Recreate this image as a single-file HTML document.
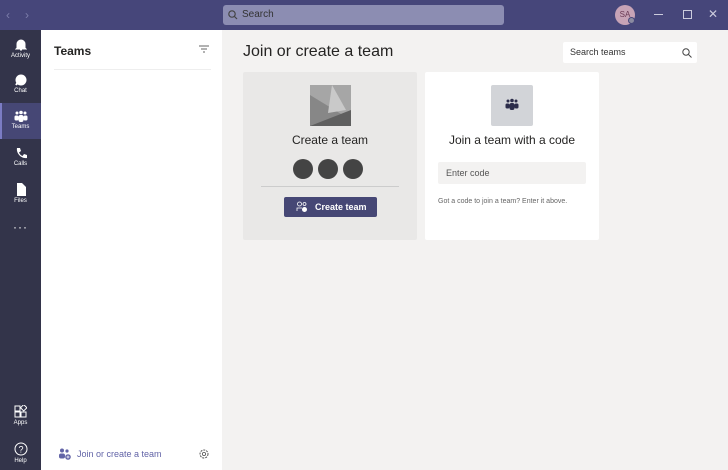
<!DOCTYPE html><html><head><style>
*{margin:0;padding:0;box-sizing:border-box}
body{width:728px;height:470px;overflow:hidden;font-family:"Liberation Sans",sans-serif;background:#f3f2f1;position:relative}
.a{position:absolute}
.top{left:0;top:0;width:728px;height:30px;background:#46467a}
.rail{left:0;top:30px;width:41px;height:440px;background:#33344a}
.ri{position:absolute;left:0;width:41px;text-align:center;color:#fff;font-size:6px}
.side{left:41px;top:30px;width:181px;height:440px;background:#fff}
.card{background:#fff;border-radius:2px}
</style></head><body>
<div class="a top">
<div class="a" style="left:6px;top:8px;color:#7d7eab;font-size:12px">‹</div>
<div class="a" style="left:25px;top:8px;color:#7d7eab;font-size:12px">›</div>
<div class="a" style="left:223px;top:5px;width:281px;height:20px;background:#8c8db2;border-radius:3px">
<svg class="a" style="left:5px;top:5px" width="10" height="10"><circle cx="4" cy="4" r="3.2" fill="none" stroke="#444" stroke-width="1.2"/><path d="M6.5 6.5L9 9" stroke="#444" stroke-width="1.2"/></svg>
<span class="a" style="left:19px;top:4px;font-size:10px;color:#333">Search</span></div>
<div class="a" style="left:615px;top:5px;width:20px;height:20px;border-radius:50%;background:#c7a3b6;font-size:8px;color:#6b3a55;text-align:center;line-height:20px">SA</div>
<div class="a" style="left:628px;top:17px;width:7px;height:7px;border-radius:50%;background:#8a8aa0;border:1px solid #46467a"></div>
<div class="a" style="left:654px;top:14px;width:9px;height:1px;background:#ccd"></div>
<div class="a" style="left:683px;top:10px;width:9px;height:9px;border:1px solid #ccd"></div>
<div class="a" style="left:708px;top:7px;color:#ccd;font-size:12px">✕</div>
</div>
<div class="a rail">
<div class="a" style="left:0;top:73px;width:41px;height:36px;background:#464775"></div>
<div class="a" style="left:0;top:73px;width:2px;height:36px;background:#7b7cc4"></div>
<div class="ri" style="top:8px"><svg width="12" height="13"><path d="M2 10V6a4 4 0 018 0v4l1 1H1z M5 12h2" fill="#fff" stroke="#fff"/></svg><br>Activity</div>
<div class="ri" style="top:44px"><svg width="12" height="12"><circle cx="6" cy="6" r="5.5" fill="#fff"/><path d="M1 11l2-3" stroke="#fff" stroke-width="2"/></svg><br>Chat</div>
<div class="ri" style="top:80px"><svg width="14" height="12"><circle cx="3" cy="3" r="1.5" fill="#fff"/><circle cx="7" cy="2.5" r="1.8" fill="#fff"/><circle cx="11" cy="3" r="1.5" fill="#fff"/><rect x="0.5" y="5.5" width="4" height="5" rx="1.5" fill="#fff"/><rect x="4.5" y="5" width="5" height="7" rx="2" fill="#fff"/><rect x="9.5" y="5.5" width="4" height="5" rx="1.5" fill="#fff"/></svg><br>Teams</div>
<div class="ri" style="top:117px"><svg width="12" height="12"><path d="M2 1l3 0 1 3-2 1.5c1 2 2 3 3.5 3.5L9 7l3 1v3c-6 1-11-5-10-10z" fill="#fff"/></svg><br>Calls</div>
<div class="ri" style="top:153px"><svg width="12" height="13"><path d="M2 0h5l4 4v9H2z" fill="#fff"/></svg><br>Files</div>
<div class="ri" style="top:190px;font-size:12px;letter-spacing:1px">···</div>
<div class="ri" style="top:375px"><svg width="13" height="13"><rect x="1" y="1" width="5" height="5" fill="none" stroke="#fff"/><rect x="1" y="7" width="5" height="5" fill="none" stroke="#fff"/><rect x="7" y="7" width="5" height="5" fill="none" stroke="#fff"/><rect x="7.5" y="0.5" width="4.5" height="4.5" fill="none" stroke="#fff" transform="rotate(45 9.7 2.7)"/></svg><br>Apps</div>
<div class="ri" style="top:412px"><svg width="14" height="14"><circle cx="7" cy="7" r="6" fill="none" stroke="#fff"/><text x="7" y="10.5" font-size="9" fill="#fff" text-anchor="middle" font-family="Liberation Sans">?</text></svg><br>Help</div>
</div>
<div class="a side">
<div class="a" style="left:13px;top:14px;font-size:12px;font-weight:bold;color:#252423">Teams</div>
<svg class="a" style="left:158px;top:15px" width="10" height="8"><path d="M0 1h10M2 4h6M4 7h2" stroke="#666" stroke-width="1"/></svg>
<div class="a" style="left:13px;top:39px;width:157px;height:1px;background:#eee"></div>
<svg class="a" style="left:17px;top:418px" width="13" height="12"><circle cx="4" cy="2.5" r="2" fill="#6264a7"/><circle cx="9" cy="3" r="1.6" fill="#6264a7"/><rect x="1" y="5.5" width="6" height="5" rx="2" fill="#6264a7"/><circle cx="10" cy="9" r="2.8" fill="#6264a7"/><path d="M8.5 9h3M10 7.5v3" stroke="#fff" stroke-width=".8"/></svg>
<div class="a" style="left:36px;top:419px;font-size:9px;color:#6264a7">Join or create a team</div>
<svg class="a" style="left:157px;top:418px" width="12" height="12"><circle cx="6" cy="6" r="4" fill="none" stroke="#555" stroke-dasharray="2 1"/><circle cx="6" cy="6" r="1.6" fill="none" stroke="#555" stroke-width=".8"/></svg>
</div>
<div class="a" style="left:243px;top:43px;font-size:16px;color:#252423">Join or create a team</div>
<div class="a card" style="left:563px;top:42px;width:134px;height:21px">
<span class="a" style="left:7px;top:5px;font-size:9px;color:#333">Search teams</span>
<svg class="a" style="left:119px;top:6px" width="10" height="10"><circle cx="4" cy="4" r="3.2" fill="none" stroke="#444"/><path d="M6.5 6.5L9.5 9.5" stroke="#444"/></svg></div>
<div class="a" style="left:243px;top:72px;width:174px;height:168px;background:#e9e8e7;border-radius:2px">
<svg class="a" style="left:67px;top:13px" width="41" height="41"><rect width="41" height="41" fill="#a6a6a6"/><path d="M0 10L41 35V41H0z" fill="#878787"/><path d="M22 0L36 25 18 28z" fill="#c9c9c9"/><path d="M0 41L41 25V41z" fill="#5f5f5f"/></svg>
<div class="a" style="left:0;top:61px;width:174px;text-align:center;font-size:12px;color:#252423">Create a team</div>
<div class="a" style="left:50px;top:87px;width:20px;height:20px;border-radius:50%;background:#444"></div>
<div class="a" style="left:75px;top:87px;width:20px;height:20px;border-radius:50%;background:#444"></div>
<div class="a" style="left:100px;top:87px;width:20px;height:20px;border-radius:50%;background:#444"></div>
<div class="a" style="left:18px;top:114px;width:138px;height:1px;background:#ccc"></div>
<div class="a" style="left:41px;top:125px;width:93px;height:20px;background:#464775;border-radius:2px;color:#fff;font-size:9px;font-weight:bold;line-height:20px;padding-left:31px">Create team</div>
<svg class="a" style="left:53px;top:129px" width="12" height="12"><circle cx="3.5" cy="3" r="2" fill="none" stroke="#fff" stroke-width=".8"/><circle cx="8.5" cy="3" r="1.5" fill="none" stroke="#fff" stroke-width=".8"/><path d="M1 10V7h5" fill="none" stroke="#fff" stroke-width=".8"/><circle cx="8.5" cy="8.5" r="2.5" fill="#fff"/></svg>
</div>
<div class="a card" style="left:425px;top:72px;width:174px;height:168px">
<div class="a" style="left:66px;top:13px;width:42px;height:41px;background:#d2d4d8;border-radius:2px"></div>
<svg class="a" style="left:80px;top:26px" width="14" height="13"><circle cx="3" cy="3" r="1.5" fill="#2b2c4a"/><circle cx="7" cy="2.5" r="1.8" fill="#2b2c4a"/><circle cx="11" cy="3" r="1.5" fill="#2b2c4a"/><rect x="0.5" y="5.5" width="4" height="5" rx="1.5" fill="#2b2c4a"/><rect x="4.5" y="5" width="5" height="7" rx="2" fill="#2b2c4a"/><rect x="9.5" y="5.5" width="4" height="5" rx="1.5" fill="#2b2c4a"/></svg>
<div class="a" style="left:0;top:61px;width:174px;text-align:center;font-size:12px;color:#252423">Join a team with a code</div>
<div class="a" style="left:13px;top:90px;width:148px;height:22px;background:#f3f2f1;border-radius:2px;font-size:9px;color:#555;line-height:22px;padding-left:8px">Enter code</div>
<div class="a" style="left:13px;top:126px;font-size:7px;color:#666">Got a code to join a team? Enter it above.</div>
</div>
</body></html>
